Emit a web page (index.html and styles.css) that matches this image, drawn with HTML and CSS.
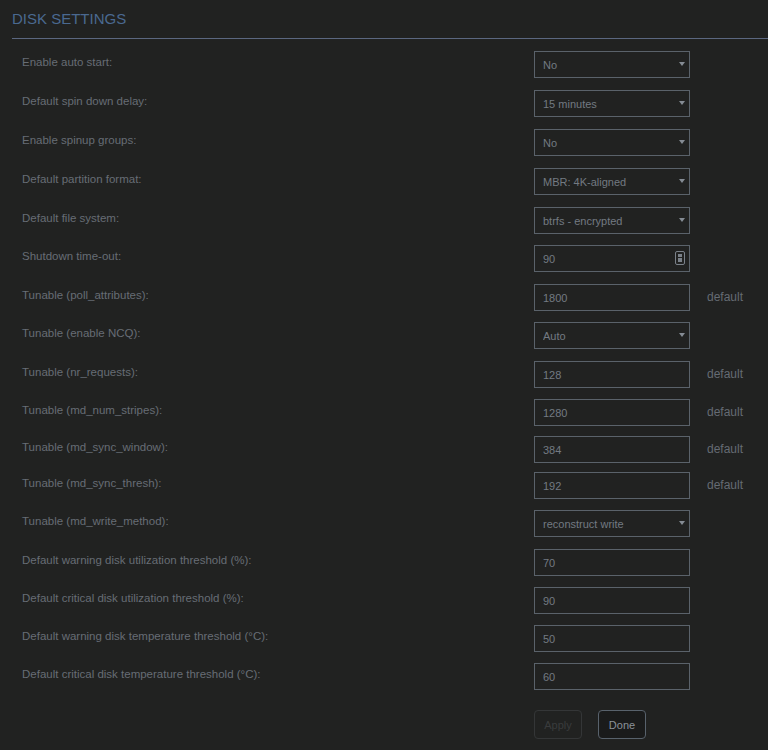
FILE: index.html
```html
<!DOCTYPE html>
<html lang="en">
<head>
  <meta charset="UTF-8" />
  <meta name="viewport" content="width=device-width, initial-scale=1.0"/>
  <title>Disk Settings</title>
  <link rel="stylesheet" href="styles.css">
</head>
<body>

  <div class="page">
    <h1 class="title">DISK SETTINGS</h1>

    <form class="settings">
      <div class="row r39">
        <label>Enable auto start:</label>
        <span class="sel"><select><option>No</option><option>Yes</option></select></span>
      </div>
      <div class="row r39">
        <label>Default spin down delay:</label>
        <span class="sel"><select><option>15 minutes</option><option>Never</option></select></span>
      </div>
      <div class="row r39">
        <label>Enable spinup groups:</label>
        <span class="sel"><select><option>No</option><option>Yes</option></select></span>
      </div>
      <div class="row r39">
        <label>Default partition format:</label>
        <span class="sel"><select><option>MBR: 4K-aligned</option></select></span>
      </div>
      <div class="row">
        <label>Default file system:</label>
        <span class="sel"><select><option>btrfs - encrypted</option></select></span>
      </div>
      <div class="row r39">
        <label>Shutdown time-out:</label>
        <span class="num">
          <input type="text" value="90">
          <svg class="spin" width="10" height="14" viewBox="0 0 10 14">
            <rect x="0.5" y="0.5" width="9" height="13" rx="1.5" fill="none" stroke="#7a8189"/>
            <rect x="3" y="3" width="4" height="3" fill="#7a8189"/>
            <rect x="3" y="7" width="4" height="4" fill="#7a8189"/>
          </svg>
        </span>
      </div>
      <div class="row">
        <label>Tunable (poll_attributes):</label>
        <input type="text" value="1800">
        <span class="hint">default</span>
      </div>
      <div class="row r39">
        <label>Tunable (enable NCQ):</label>
        <span class="sel"><select><option>Auto</option><option>Yes</option><option>No</option></select></span>
      </div>
      <div class="row">
        <label>Tunable (nr_requests):</label>
        <input type="text" value="128">
        <span class="hint">default</span>
      </div>
      <div class="row r37">
        <label>Tunable (md_num_stripes):</label>
        <input type="text" value="1280">
        <span class="hint">default</span>
      </div>
      <div class="row r36">
        <label>Tunable (md_sync_window):</label>
        <input type="text" value="384">
        <span class="hint">default</span>
      </div>
      <div class="row">
        <label>Tunable (md_sync_thresh):</label>
        <input type="text" value="192">
        <span class="hint">default</span>
      </div>
      <div class="row r39">
        <label>Tunable (md_write_method):</label>
        <span class="sel"><select><option>reconstruct write</option></select></span>
      </div>
      <div class="row">
        <label>Default warning disk utilization threshold (%):</label>
        <input type="text" value="70">
      </div>
      <div class="row">
        <label>Default critical disk utilization threshold (%):</label>
        <input type="text" value="90">
      </div>
      <div class="row">
        <label>Default warning disk temperature threshold (°C):</label>
        <input type="text" value="50">
      </div>
      <div class="row">
        <label>Default critical disk temperature threshold (°C):</label>
        <input type="text" value="60">
      </div>

      <div class="actions">
        <button type="button" class="btn" disabled>Apply</button>
        <button type="button" class="btn">Done</button>
      </div>
    </form>
  </div>

</body>
</html>
```

FILE: styles.css
```css
* { box-sizing: border-box; }

html, body {
  background: #212221;
}

body {
  font-family: 'Liberation Sans', Arial, sans-serif;
  margin: 0;
  padding: 0;
  height: 750px;
  overflow: hidden;
}

.page {
  padding-left: 12px;
}

.title {
  margin: 0;
  padding: 9px 0 9px 0;
  font-size: 15px;
  font-weight: normal;
  line-height: 20px;
  color: #4a6990;
  border-bottom: 1px solid #5b6780;
}

.settings {
  padding-top: 12px;
  margin: 0;
}

.row {
  display: flex;
  align-items: flex-start;
  height: 38px;
}

.row.r39 { height: 39px; }
.row.r37 { height: 37px; }
.row.r36 { height: 36px; }

.row label {
  width: 522px;
  padding-left: 10px;
  padding-top: 4px;
  font-size: 11.5px;
  line-height: 14px;
  color: #676d75;
}

.row input,
.row select {
  width: 156px;
  height: 27px;
  padding: 0 8px;
  font-family: inherit;
  font-size: 11px;
  color: #737a82;
  background: transparent;
  border: 1px solid #5a626a;
  border-radius: 0;
  outline: none;
  margin: 0;
}

.row select {
  appearance: none;
  -webkit-appearance: none;
}

.sel,
.num {
  position: relative;
  display: block;
  width: 156px;
  height: 27px;
}

.sel::after {
  content: "";
  position: absolute;
  right: 5px;
  top: 11px;
  border-left: 3px solid transparent;
  border-right: 3px solid transparent;
  border-top: 4px solid #858c94;
}

.spin {
  position: absolute;
  right: 5px;
  top: 6px;
}

.hint {
  margin-left: 17px;
  font-size: 12px;
  line-height: 27px;
  color: #656b73;
}

.actions {
  display: flex;
  gap: 16px;
  margin-top: 9px;
  margin-left: 522px;
}

.btn {
  width: 48px;
  height: 29px;
  font-family: inherit;
  font-size: 11px;
  color: #8a9199;
  background: #1a1b1b;
  border: 1px solid #58626c;
  border-radius: 4px;
  padding: 0;
}

.btn:disabled {
  color: #3a3c3d;
  background: transparent;
  border-color: #343637;
}
```
